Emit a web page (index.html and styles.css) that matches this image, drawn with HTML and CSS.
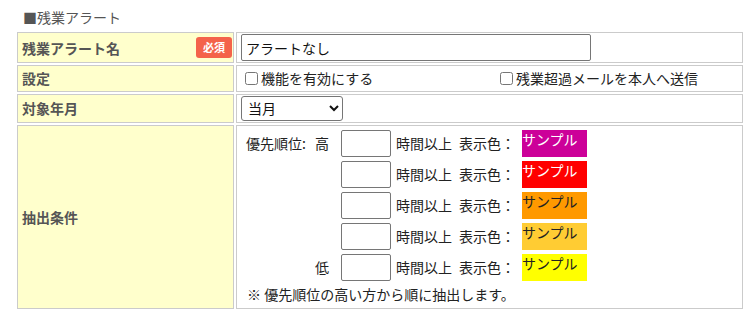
FILE: index.html
```html
<!DOCTYPE html>
<html lang="ja">
<head>
  <meta charset="UTF-8">
  <title>残業アラート</title>
  <link rel="stylesheet" href="styles.css">
</head>
<body>
  <section class="panel">
    <h2 class="panel-title">■残業アラート</h2>

    <table class="form-table">
      <tr class="row-name">
        <th>
          <div class="label-wrap">
            <span>残業アラート名</span>
            <span class="badge">必須</span>
          </div>
        </th>
        <td><input type="text" class="text-input" value="アラートなし"></td>
      </tr>
      <tr class="row-setting">
        <th>設定</th>
        <td>
          <label class="opt opt-first"><input type="checkbox">機能を有効にする</label><label class="opt"><input type="checkbox">残業超過メールを本人へ送信</label>
        </td>
      </tr>
      <tr class="row-month">
        <th>対象年月</th>
        <td>
          <select class="month-select">
            <option>当月</option>
            <option>前月</option>
          </select>
        </td>
      </tr>
      <tr class="row-cond">
        <th>抽出条件</th>
        <td>
          <div class="cond-grid">
            <span class="cond-label">優先順位:<span class="prio">高</span></span>
            <input type="text" class="hour-input">
            <span class="cond-text">時間以上<span class="color-label">表示色：</span></span>
            <span class="sample sample-1">サンプル</span>

            <span class="cond-label"></span>
            <input type="text" class="hour-input">
            <span class="cond-text">時間以上<span class="color-label">表示色：</span></span>
            <span class="sample sample-2">サンプル</span>

            <span class="cond-label"></span>
            <input type="text" class="hour-input">
            <span class="cond-text">時間以上<span class="color-label">表示色：</span></span>
            <span class="sample sample-3">サンプル</span>

            <span class="cond-label"></span>
            <input type="text" class="hour-input">
            <span class="cond-text">時間以上<span class="color-label">表示色：</span></span>
            <span class="sample sample-4">サンプル</span>

            <span class="cond-label">低</span>
            <input type="text" class="hour-input">
            <span class="cond-text">時間以上<span class="color-label">表示色：</span></span>
            <span class="sample sample-5">サンプル</span>
          </div>
          <p class="note">※ 優先順位の高い方から順に抽出します。</p>
        </td>
      </tr>
    </table>
  </section>
</body>
</html>
```

FILE: styles.css
```css
body {
  margin: 0;
  font-family: "Noto Sans CJK JP", "Noto Sans", sans-serif;
  font-size: 14px;
  color: #222;
  background: #fff;
}

.panel {
  padding: 8px 8px 0 15px;
}

.panel-title {
  margin: 0 0 4px 8px;
  font-size: 14px;
  font-weight: normal;
  line-height: 18px;
  color: #555;
}



.form-table {
  width: 730px;
  border-collapse: separate;
  border-spacing: 2px;
  table-layout: fixed;
}

.form-table th {
  width: 210px;
  padding: 0 1px 0 4px;
  background-color: #ffffcc;
  border: 1px solid #cbcbcb;
  color: #555;
  font-weight: bold;
  text-align: left;
  vertical-align: middle;
  line-height: 20px;
}

.form-table td {
  padding: 1px 4px;
  border: 1px solid #cbcbcb;
  vertical-align: middle;
  line-height: 20px;
}

.label-wrap {
  display: flex;
  justify-content: space-between;
  align-items: center;
}

.badge {
  width: 36px;
  height: 21px;
  border-radius: 3px;
  background-color: #f4634a;
  color: #fff;
  font-size: 11px;
  line-height: 21px;
  text-align: center;
}

.text-input {
  box-sizing: border-box;
  width: 350px;
  height: 27px;
  margin: 0;
  padding: 0 4px;
  border: 1px solid #767676;
  border-radius: 2px;
  font: inherit;
  color: #111;
  display: block;
}



.row-setting td {
  padding: 2px 4px;
}

.opt {
  display: inline-flex;
  align-items: center;
  color: #222;
}

.opt-first {
  width: 255px;
}

.opt input {
  width: 13px;
  height: 13px;
  margin: 0 3px 0 4px;
}

.month-select {
  display: block;
  width: 102px;
  height: 25px;
  margin: 0;
  padding: 0 2px;
  border: 1px solid #767676;
  border-radius: 3px;
  font: inherit;
  color: #111;
  background: #fff;
}



.row-cond td {
  padding: 4px;
  vertical-align: top;
}

.cond-grid {
  display: grid;
  grid-template-columns: 100px 50px auto auto;
  justify-content: start;
  align-items: center;
  row-gap: 4px;
}

.cond-label {
  white-space: nowrap;
  text-align: right;
  padding-right: 12px;
}

.prio {
  margin-left: 9px;
}

.hour-input {
  box-sizing: border-box;
  width: 50px;
  height: 27px;
  margin: 0;
  border: 1px solid #767676;
  border-radius: 2px;
}

.cond-text {
  white-space: nowrap;
  padding-left: 5px;
}

.color-label {
  margin-left: 7px;
}

.sample {
  align-self: start;
  width: 65px;
  height: 27px;
  margin-left: 7px;
  line-height: 18px;
}

.sample-1 { background-color: #cc0099; color: #fff; }
.sample-2 { background-color: #ff0000; color: #fff; }
.sample-3 { background-color: #ff9900; color: #222; }
.sample-4 { background-color: #ffcc33; color: #222; }
.sample-5 { background-color: #ffff00; color: #222; }

.note {
  margin: 3px 0 0 6px;
}
```
